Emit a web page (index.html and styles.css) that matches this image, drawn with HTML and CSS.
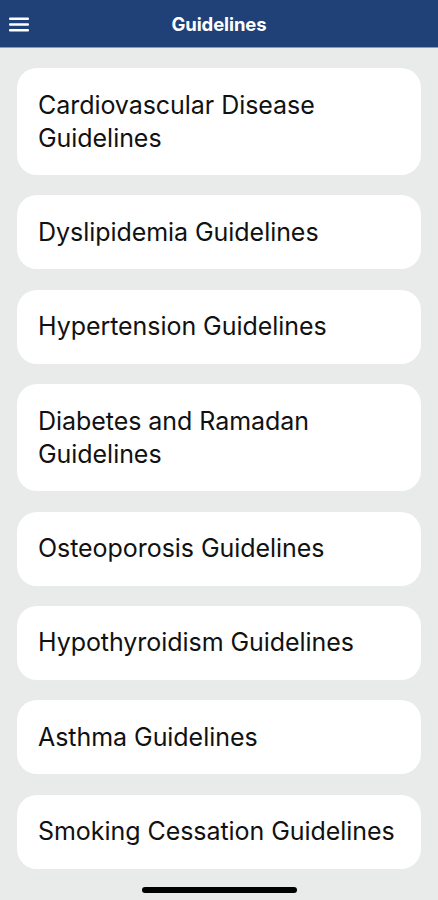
FILE: index.html
```html
<!DOCTYPE html>
<html lang="en">
  <head>
    <meta charset="UTF-8" />
    <meta name="viewport" content="width=device-width, initial-scale=1.0" />
    <title>Guidelines</title>
    <link rel="stylesheet" href="styles.css">
  </head>
  <body>
    <header class="topbar">
      <button class="menu-btn" aria-label="Menu">
        <svg width="20" height="15" viewBox="0 0 20 15">
          <rect x="0" y="0.5" width="20" height="2.6" rx="1" fill="#fff" />
          <rect x="0" y="6.2" width="20" height="2.6" rx="1" fill="#fff" />
          <rect x="0" y="11.9" width="20" height="2.6" rx="1" fill="#fff" />
        </svg>
      </button>
      <h1>Guidelines</h1>
    </header>
    <main class="list">
      <a class="card" href="#">Cardiovascular Disease Guidelines</a>
      <a class="card" href="#">Dyslipidemia Guidelines</a>
      <a class="card" href="#">Hypertension Guidelines</a>
      <a class="card" href="#">Diabetes and Ramadan Guidelines</a>
      <a class="card" href="#">Osteoporosis Guidelines</a>
      <a class="card" href="#">Hypothyroidism Guidelines</a>
      <a class="card" href="#">Asthma Guidelines</a>
      <a class="card" href="#">Smoking Cessation Guidelines</a>
    </main>
    <div class="home-indicator"></div>
  </body>
</html>
```

FILE: styles.css
```css
* {
  margin: 0;
  padding: 0;
  box-sizing: border-box;
}

body {
  font-family: "Inter", "Noto Sans", sans-serif;
  background: #e9eaea;
  width: 438px;
  height: 900px;
  overflow: hidden;
  position: relative;
}

.topbar {
  height: 48px;
  background: #1f4177;
  border-bottom: 1px solid #8a9bb5;
  display: flex;
  align-items: center;
  justify-content: center;
  position: relative;
}

.topbar h1 {
  color: #fff;
  font-size: 18.5px;
  font-weight: 700;
  letter-spacing: -0.1px;
}

.menu-btn {
  position: absolute;
  left: 9px;
  top: 17px;
  background: none;
  border: none;
  display: flex;
}

.list {
  display: flex;
  flex-direction: column;
  gap: 20.4px;
  padding: 20px 17px 0 17px;
}

.card {
  display: block;
  background: #fff;
  border-radius: 20px;
  padding: 20.5px 8px 20.5px 21px;
  color: #111;
  text-decoration: none;
  font-size: 25px;
  line-height: 33px;
  letter-spacing: -0.05px;
}

.home-indicator {
  position: absolute;
  left: 142px;
  bottom: 7px;
  width: 155px;
  height: 6px;
  border-radius: 3px;
  background: #000;
}
```
